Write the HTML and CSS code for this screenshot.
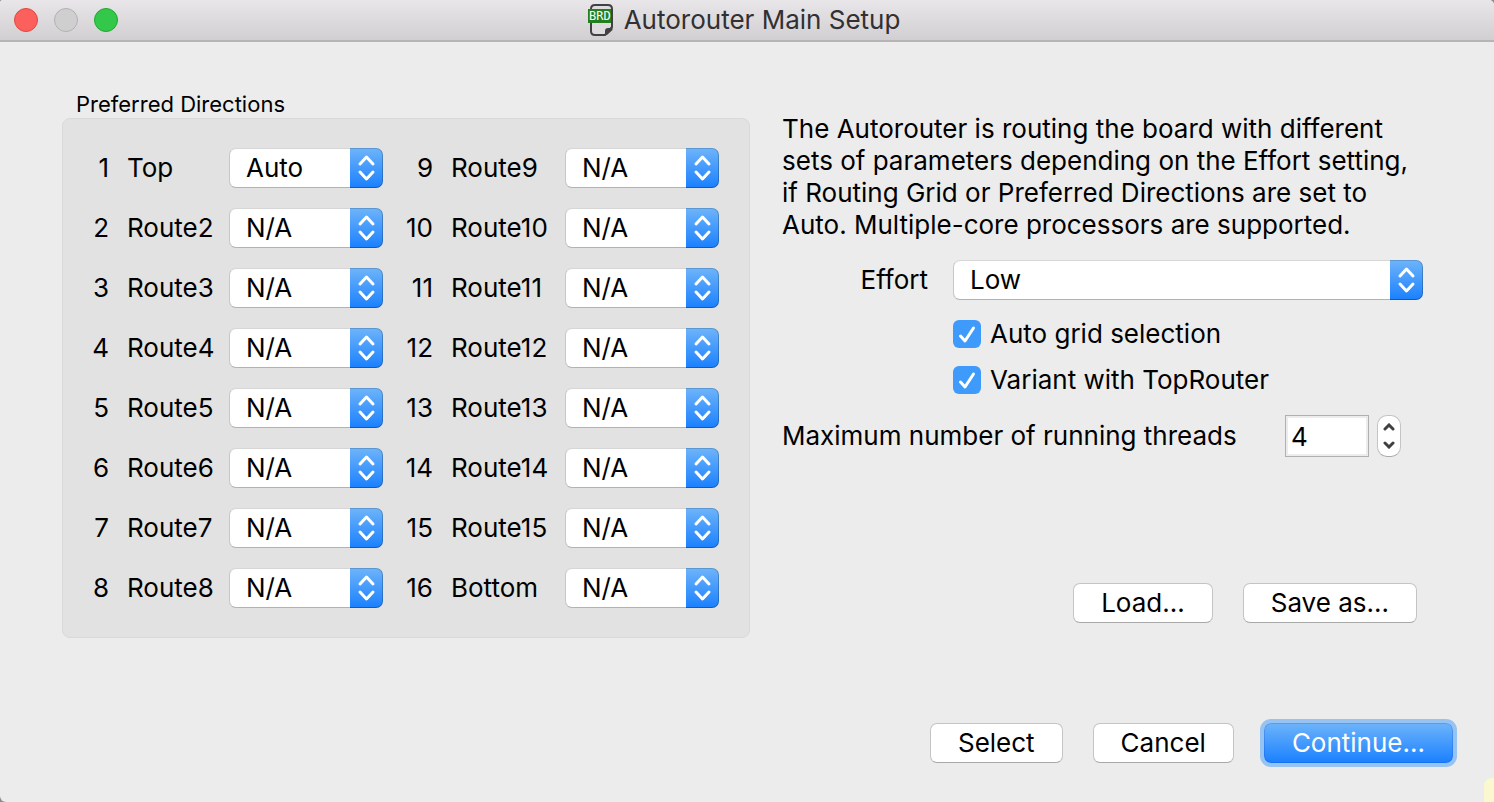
FILE: index.html
```html
<!DOCTYPE html>
<html lang="en">
  <head>
    <meta charset="utf-8" />
    <title>Autorouter Main Setup</title>
    <link rel="stylesheet" href="styles.css">
  </head>
  <body>
    <div class="window">
      <header class="titlebar">
        <div class="lights">
          <button type="button" class="light light-close" aria-label="Close"></button>
          <button type="button" class="light light-min" aria-label="Minimize" disabled></button>
          <button type="button" class="light light-zoom" aria-label="Zoom"></button>
        </div>
        <h1 class="title">
          <svg class="title-icon" width="26" height="34" viewBox="0 0 26 34" aria-hidden="true">
            <path d="M7 2h13q4 0 4 4v18l-7 8H7q-4 0-4-4V6q0-4 4-4z" fill="#dedcde" stroke="#414042" stroke-width="2" />
            <path d="M24.5 25v2L19 32h-2v-4q0-3 3-3z" fill="#414042" />
            <rect x="0" y="6" width="23" height="14" fill="#23801f" />
            <text class="icon-text" x="1" y="17">BRD</text>
          </svg>
          Autorouter Main Setup
        </h1>
      </header>

      <form class="setup">
        <main class="columns">
          <section>
            <h2 class="group-title">Preferred Directions</h2>
            <div class="group">
              <span class="num">1</span>
              <label for="l1">Top</label>
              <select id="l1"><option>Auto</option><option>N/A</option></select>
              <span class="num">9</span>
              <label for="l9">Route9</label>
              <select id="l9"><option>N/A</option><option>Auto</option></select>

              <span class="num">2</span>
              <label for="l2">Route2</label>
              <select id="l2"><option>N/A</option><option>Auto</option></select>
              <span class="num">10</span>
              <label for="l10">Route10</label>
              <select id="l10"><option>N/A</option><option>Auto</option></select>

              <span class="num">3</span>
              <label for="l3">Route3</label>
              <select id="l3"><option>N/A</option><option>Auto</option></select>
              <span class="num">11</span>
              <label for="l11">Route11</label>
              <select id="l11"><option>N/A</option><option>Auto</option></select>

              <span class="num">4</span>
              <label for="l4">Route4</label>
              <select id="l4"><option>N/A</option><option>Auto</option></select>
              <span class="num">12</span>
              <label for="l12">Route12</label>
              <select id="l12"><option>N/A</option><option>Auto</option></select>

              <span class="num">5</span>
              <label for="l5">Route5</label>
              <select id="l5"><option>N/A</option><option>Auto</option></select>
              <span class="num">13</span>
              <label for="l13">Route13</label>
              <select id="l13"><option>N/A</option><option>Auto</option></select>

              <span class="num">6</span>
              <label for="l6">Route6</label>
              <select id="l6"><option>N/A</option><option>Auto</option></select>
              <span class="num">14</span>
              <label for="l14">Route14</label>
              <select id="l14"><option>N/A</option><option>Auto</option></select>

              <span class="num">7</span>
              <label for="l7">Route7</label>
              <select id="l7"><option>N/A</option><option>Auto</option></select>
              <span class="num">15</span>
              <label for="l15">Route15</label>
              <select id="l15"><option>N/A</option><option>Auto</option></select>

              <span class="num">8</span>
              <label for="l8">Route8</label>
              <select id="l8"><option>N/A</option><option>Auto</option></select>
              <span class="num">16</span>
              <label for="l16">Bottom</label>
              <select id="l16"><option>N/A</option><option>Auto</option></select>
            </div>
          </section>

          <section class="options">
            <p class="intro">
              The Autorouter is routing the board with different sets of
              parameters depending on the Effort setting, if Routing Grid or
              Preferred Directions are set to Auto. Multiple-core processors
              are supported.
            </p>
            <div class="effort">
              <label class="effort-label" for="effort">Effort</label>
              <select id="effort"><option>Low</option><option>Medium</option><option>High</option></select>
              <div class="checks">
                <label class="check"><input type="checkbox" checked />Auto grid selection</label>
                <label class="check"><input type="checkbox" checked />Variant with TopRouter</label>
              </div>
            </div>
            <div class="threads">
              <label class="threads-label" for="threads">Maximum number of running threads</label>
              <input class="threads-input" id="threads" type="number" value="4" min="1" />
              <div class="stepper">
                <button type="button" id="step-up" aria-label="More threads">
                  <svg width="12" height="8" viewBox="0 0 12 8"><path d="M2 6l4-4 4 4" /></svg>
                </button>
                <button type="button" id="step-down" aria-label="Fewer threads">
                  <svg width="12" height="8" viewBox="0 0 12 8"><path d="M2 2l4 4 4-4" /></svg>
                </button>
              </div>
            </div>
            <div class="buttons file-buttons">
              <button type="button" class="btn">Load...</button>
              <button type="button" class="btn">Save as...</button>
            </div>
          </section>
        </main>

        <footer class="buttons footer">
          <button type="button" class="btn">Select</button>
          <button type="button" class="btn">Cancel</button>
          <button type="submit" class="btn btn-primary">Continue...</button>
        </footer>
      </form>
      <div class="corner-note"></div>
    </div>
    <script>
      const threads = document.getElementById('threads');
      document
        .getElementById('step-up')
        .addEventListener('click', () => threads.stepUp());
      document
        .getElementById('step-down')
        .addEventListener('click', () => threads.stepDown());
    </script>
  </body>
</html>
```
FILE: styles.css
```css
* {
  box-sizing: border-box;
}
body {
  margin: 0;
  background: #8c8c8c;
  color: #000;
  font: 26px/32px Inter, "Liberation Sans", sans-serif;
}
h1,
h2,
p {
  margin: 0;
  font-weight: normal;
}
button,
input,
select {
  margin: 0;
  font: inherit;
  color: inherit;
}
.window {
  position: relative;
  display: flex;
  flex-direction: column;
  min-height: 100vh;
  overflow: hidden;
  background: #ececec;
  border-radius: 3px 5px 0 6px;
}

/* title bar */
.titlebar {
  display: grid;
  grid-template-columns: 1fr auto 1fr;
  align-items: center;
  height: 42px;
  padding: 0 20px 0 14px;
  background: linear-gradient(#e8e6e8, #d1cfd1);
  border-bottom: 2px solid #b6b4b6;
}
.lights {
  display: flex;
  gap: 16px;
}
.light {
  width: 24px;
  height: 24px;
  padding: 0;
  border: 1px solid;
  border-radius: 50%;
}
.light-close {
  background: #fc605c;
  border-color: #e04844;
}
.light-min {
  background: #d0cfd0;
  border-color: #b3b1b3;
}
.light-zoom {
  background: #34c84a;
  border-color: #1fa82f;
}
.title {
  display: flex;
  align-items: center;
  gap: 10px;
  color: #323032;
  font-size: 26px;
}
.icon-text {
  fill: #fff;
  font: 12px "DejaVu Sans Mono", monospace;
}

/* layout */
.setup {
  flex: 1;
  display: flex;
  flex-direction: column;
  justify-content: space-between;
}
.columns {
  display: grid;
  grid-template-columns: auto 1fr;
  gap: 32px;
  padding: 50px 71px 0 62px;
}
.group-title {
  padding-left: 14px;
  margin-bottom: 2px;
  font-size: 22px;
  line-height: 24px;
}
.group {
  display: grid;
  grid-template-columns: 27px 84px 154px 32px 96px 154px;
  gap: 20px 18px;
  align-items: center;
  padding: 29px 30px 29px 19px;
  background: #e2e2e2;
  border: 1px solid #d9d9d9;
  border-radius: 8px;
}
.group label {
  white-space: nowrap;
}
.num {
  text-align: right;
}

/* controls */
select {
  appearance: none;
  width: 100%;
  height: 40px;
  padding: 0 40px 0 16px;
  border: 1px solid rgba(0, 0, 0, 0.22);
  border-top-color: rgba(0, 0, 0, 0.16);
  border-bottom-color: rgba(0, 0, 0, 0.3);
  border-radius: 7px;
  background:
    url("data:image/svg+xml,%3Csvg xmlns='http://www.w3.org/2000/svg' width='33' height='40' fill='none' stroke='white' stroke-width='3' stroke-linecap='round' stroke-linejoin='round'%3E%3Cpath d='M10 16l6.500-7 6.500 7M10 24l6.500 7 6.500-7'/%3E%3C/svg%3E") right / 33px 40px no-repeat border-box,
    linear-gradient(#6eb4fa, #1a80ff) right / 33px 100% no-repeat border-box,
    #fff;
}
.options {
  display: flex;
  flex-direction: column;
  padding-top: 21px;
}
.effort {
  display: grid;
  grid-template-columns: 146px 1fr;
  gap: 18px 25px;
  align-items: center;
  margin-top: 19px;
}
.effort-label {
  text-align: right;
}
.checks {
  grid-column: 2;
  display: grid;
  gap: 14px;
}
.check {
  display: flex;
  align-items: center;
  gap: 9px;
  height: 32px;
}
.check input {
  appearance: none;
  width: 28px;
  height: 28px;
  border-radius: 6px;
}
.check input:checked {
  background: #3f9bfb url("data:image/svg+xml,%3Csvg xmlns='http://www.w3.org/2000/svg' width='28' height='28' fill='none' stroke='white' stroke-width='3' stroke-linecap='round' stroke-linejoin='round'%3E%3Cpath d='M7.500 16l4.500 5L20.500 8'/%3E%3C/svg%3E");
}
.threads {
  display: flex;
  align-items: center;
  gap: 8px;
  margin-top: 19px;
  padding-right: 22px;
}
.threads-label {
  flex: 1;
}
.threads-input {
  appearance: textfield;
  width: 84px;
  height: 42px;
  padding: 0 5px;
  background: #fff;
  border: 1px solid #b0b0b0;
  box-shadow: inset 0 0 0 2px #ececec;
}
.threads-input::-webkit-inner-spin-button {
  display: none;
}
.stepper {
  display: flex;
  flex-direction: column;
  width: 24px;
  height: 42px;
  padding: 2px 0;
  background: #fff;
  border: 1px solid #c4c4c4;
  border-bottom-color: #a8a8a8;
  border-radius: 10px;
}
.stepper button {
  flex: 1;
  display: flex;
  align-items: center;
  justify-content: center;
  padding: 0;
  border: 0;
  background: none;
}
.stepper path {
  fill: none;
  stroke: #404040;
  stroke-width: 3;
  stroke-linecap: round;
}
.buttons {
  display: flex;
  justify-content: flex-end;
  gap: 30px;
}
.btn {
  height: 40px;
  padding: 0 27px;
  background: #fff;
  border: 1px solid #c4c4c4;
  border-bottom-color: #a8a8a8;
  border-radius: 7px;
}
.btn-primary {
  color: #fff;
  background: linear-gradient(#6eb4fa, #1a80ff) border-box;
  border-color: rgba(0, 60, 200, 0.2);
  box-shadow: 0 0 0 4px #97c3f3;
}
.file-buttons {
  margin-top: auto;
  padding: 0 6px 15px 0;
}
.footer {
  padding: 0 41px 39px;
}

/* edge of a yellow note that peeks out in the corner */
.corner-note {
  position: absolute;
  right: 0;
  bottom: 0;
  width: 10px;
  height: 24px;
  background: #fbf8d0;
  border-top-left-radius: 8px;
}
```
